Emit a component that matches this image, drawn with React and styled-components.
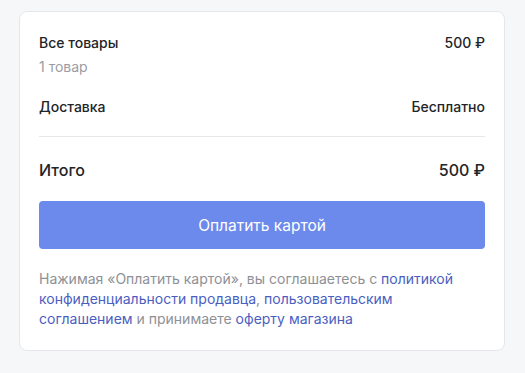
import React from "react";
import styled, { createGlobalStyle } from "styled-components";

const Global = createGlobalStyle`
  html, body { margin: 0; padding: 0; background: #f6f7f9; }
  body { font-family: Inter, "Noto Sans", sans-serif; -webkit-font-smoothing: antialiased; }
`;

const Page = styled.div`
  padding: 11px 20px 24px 19px;
`;

const Card = styled.div`
  width: 486px;
  box-sizing: border-box;
  background: #fff;
  border: 1px solid #e6e7eb;
  border-radius: 8px;
  padding: 22px 19px 21px 19px;
`;

const Row = styled.div`
  display: flex;
  justify-content: space-between;
  align-items: baseline;
  color: #222427;
  font-size: ${(p) => (p.$big ? "16px" : "14px")};
  font-weight: 500;
  line-height: 18px;
  margin-top: ${(p) => p.$mt || 0}px;
`;

const Sub = styled.div`
  color: #9a9da3;
  font-size: 14px;
  line-height: 18px;
  margin-top: 6px;
`;

const Divider = styled.div`
  height: 1px;
  background: #e6e7eb;
  margin: 20px 0 24px;
`;

const PayButton = styled.button`
  display: block;
  width: 100%;
  height: 48px;
  margin-top: 22px;
  border: none;
  border-radius: 4px;
  background: #6b8aeb;
  color: #fff;
  font-family: inherit;
  font-size: 15.5px;
  font-weight: 400;
  cursor: pointer;
`;

const Legal = styled.p`
  margin: 20px 0 0;
  font-size: 14px;
  line-height: 20px;
  color: #8e9096;
`;

const Link = styled.a`
  color: #4a5ec2;
  text-decoration: none;
`;

export default function App() {
  return (
    <>
      <Global />
      <Page>
        <Card>
          <Row>
            <span>Все товары</span>
            <span>500 ₽</span>
          </Row>
          <Sub>1 товар</Sub>
          <Row $mt={22}>
            <span>Доставка</span>
            <span>Бесплатно</span>
          </Row>
          <Divider />
          <Row $big>
            <span>Итого</span>
            <span>500 ₽</span>
          </Row>
          <PayButton>Оплатить картой</PayButton>
          <Legal>
            Нажимая «Оплатить картой», вы соглашаетесь с{" "}
            <Link href="#">политикой конфиденциальности продавца</Link>,{" "}
            <Link href="#">пользовательским соглашением</Link> и принимаете{" "}
            <Link href="#">оферту магазина</Link>
          </Legal>
        </Card>
      </Page>
    </>
  );
}
